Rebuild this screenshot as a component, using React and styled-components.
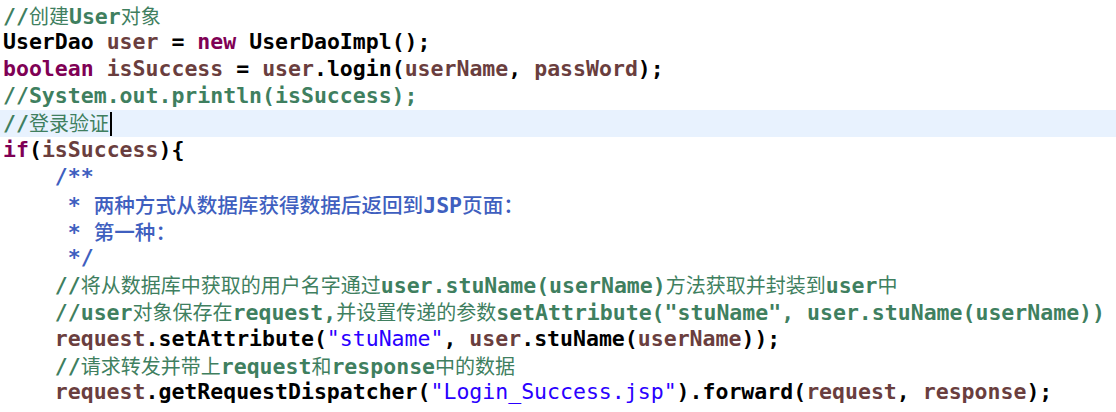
import React from "react";
import styled, { createGlobalStyle } from "styled-components";

const Global = createGlobalStyle`
  html, body { margin: 0; padding: 0; background: #ffffff; overflow: hidden; }
  #root { width: 1116px; height: 412px; overflow: hidden; }
`;

const Editor = styled.div`
  margin-top: -24.4px;
  background: #ffffff;
  font-family: "DejaVu Sans Mono", "Liberation Mono", "Noto Sans CJK SC", monospace;
  font-size: 21.52px;
  font-weight: 700;
  color: #000000;
`;

const Line = styled.div`
  height: 26.93px;
  line-height: 26.93px;
  padding-left: ${(p) => p.$indent * 12.95 + 3}px;
  white-space: pre;
  background: ${(p) => (p.$current ? "#E8F2FE" : "transparent")};
`;

const Kw = styled.span`
  color: #7f0055;
`;
const Var = styled.span`
  color: #6a3e3e;
`;
const Str = styled.span`
  color: #2a00ff;
  font-weight: 400;
`;
const Comment = styled.span`
  color: #3f7f5f;
`;
const Doc = styled.span`
  color: #3f5fbf;
`;
const Han = styled.span`
  font-family: "Noto Sans CJK SC", sans-serif;
  font-size: ${(p) => (p.$strong ? 20.6 : 20)}px;
  font-weight: ${(p) => (p.$strong ? 500 : 400)};
`;
const Caret = styled.span`
  display: inline-block;
  width: 2px;
  height: 24px;
  margin-left: 1px;
  background: #000000;
  vertical-align: -5px;
`;

const CJK = /([\u3000-\u303f\u4e00-\u9fff\uff00-\uffef]+)/;

function T({ text, strong }) {
  return text.split(CJK).map((part, i) =>
    CJK.test(part) ? (
      <Han key={i} $strong={strong}>
        {part}
      </Han>
    ) : (
      <React.Fragment key={i}>{part}</React.Fragment>
    )
  );
}

export default function App() {
  return (
    <>
      <Global />
      <Editor>
        <Line $indent={0}>
          String <Var>passWord</Var> = <Var>request</Var>.getParameter(
          <Str>"passWord"</Str>);
        </Line>
        <Line $indent={0}>
          <Comment>
            <T text="//创建User对象" />
          </Comment>
        </Line>
        <Line $indent={0}>
          UserDao <Var>user</Var> = <Kw>new</Kw> UserDaoImpl();
        </Line>
        <Line $indent={0}>
          <Kw>boolean</Kw> <Var>isSuccess</Var> = <Var>user</Var>.login(
          <Var>userName</Var>, <Var>passWord</Var>);
        </Line>
        <Line $indent={0}>
          <Comment>//System.out.println(isSuccess);</Comment>
        </Line>
        <Line $indent={0} $current>
          <Comment>
            <T text="//登录验证" />
          </Comment>
          <Caret />
        </Line>
        <Line $indent={0}>
          <Kw>if</Kw>(<Var>isSuccess</Var>){"{"}
        </Line>
        <Line $indent={4}>
          <Doc>/**</Doc>
        </Line>
        <Line $indent={4}>
          <Doc>
            <T text=" * 两种方式从数据库获得数据后返回到JSP页面：" strong />
          </Doc>
        </Line>
        <Line $indent={4}>
          <Doc>
            <T text=" * 第一种：" strong />
          </Doc>
        </Line>
        <Line $indent={4}>
          <Doc> */</Doc>
        </Line>
        <Line $indent={4}>
          <Comment>
            <T text="//将从数据库中获取的用户名字通过user.stuName(userName)方法获取并封装到user中" />
          </Comment>
        </Line>
        <Line $indent={4}>
          <Comment>
            <T text={'//user对象保存在request,并设置传递的参数setAttribute("stuName", user.stuName(userName))'} />
          </Comment>
        </Line>
        <Line $indent={4}>
          <Var>request</Var>.setAttribute(<Str>"stuName"</Str>, <Var>user</Var>.stuName(
          <Var>userName</Var>));
        </Line>
        <Line $indent={4}>
          <Comment>
            <T text="//请求转发并带上request和response中的数据" />
          </Comment>
        </Line>
        <Line $indent={4}>
          <Var>request</Var>.getRequestDispatcher(<Str>"Login_Success.jsp"</Str>).forward(
          <Var>request</Var>, <Var>response</Var>);
        </Line>
      </Editor>
    </>
  );
}
